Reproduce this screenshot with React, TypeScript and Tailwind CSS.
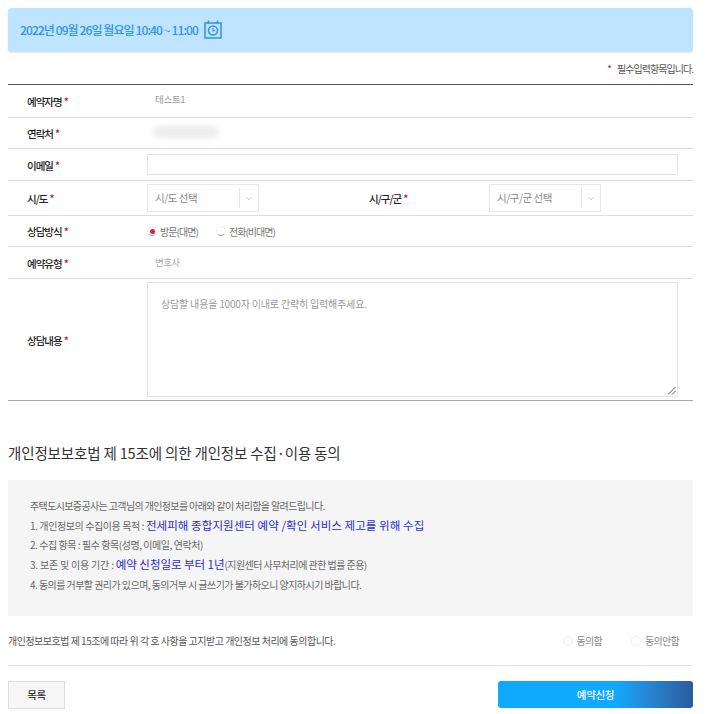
import React from 'react';

const Star = () => <span className="text-[#c8102e] ml-[2px]">*</span>;

const Row = ({ label, h, last, children }: { label: string; h: string; last?: boolean; children: React.ReactNode }) => (
  <div className={`flex items-center ${h} border-b ${last ? 'border-[#aaaaaa]' : 'border-[#dddddd]'}`}>
    <div className="w-[139px] shrink-0 pl-[19px] pt-[2px] text-[10.5px] font-medium text-[#222222] tracking-[-1px]">
      {label}
      <Star />
    </div>
    <div className="flex-1 flex items-center min-w-0">{children}</div>
  </div>
);

const SelectBox = ({ text }: { text: string }) => (
  <div className="flex items-center w-[112px] h-[28px] border border-[#e8e8e8] bg-white">
    <span className="flex-1 pl-[7px] text-[10.5px] text-[#888888] tracking-[-0.5px]">{text}</span>
    <span className="flex items-center justify-center w-[19px] h-[20px] border-l border-[#e3e3e3]">
      <svg width="8" height="5" viewBox="0 0 8 5" fill="none" stroke="#d0d0d0" strokeWidth="1">
        <path d="M1 1l3 3 3-3" />
      </svg>
    </span>
  </div>
);

const Radio = ({ checked, faint, label }: { checked?: boolean; faint?: boolean; label: string }) => (
  <span className={`flex items-center ${faint ? 'gap-[4px]' : 'gap-[3px]'}`}>
    <span
      className={`flex items-center justify-center w-[10px] h-[10px] rounded-full border ${
        faint ? 'border-[#eeeeee]' : 'border-[#eeeeee] border-b-[#999999]'
      }`}
    >
      {checked && <span className="w-[5px] h-[5px] rounded-full bg-[#c8283c]" />}
    </span>
    <span>{label}</span>
  </span>
);

export default function App() {
  return (
    <div className="w-[709px] h-[714px] overflow-hidden bg-white pt-[8px] pl-[8px] pr-[16px] font-['Noto_Sans_CJK_KR','Noto_Sans',sans-serif]">
      {/* 예약 일시 */}
      <div className="flex items-center gap-[6px] h-[44px] pl-[12px] rounded-[4px] bg-[#bfe4fe] shadow-[0_1px_2px_rgba(0,0,0,0.12)]">
        <span className="text-[12px] font-medium text-[#2f93e6] tracking-[-0.9px]">2022년 09월 26일 월요일 10:40 ~ 11:00</span>
        <svg className="-mt-[1px]" width="18" height="19" viewBox="0 0 18 19" fill="none" stroke="#2f93e6" strokeWidth="1.5">
          <rect x="1" y="3" width="16" height="15" />
          <path d="M4.5 0.5v3M13.5 0.5v3" />
          <circle cx="9" cy="10.5" r="4.5" />
          <path d="M9 8v2.7h2.2" strokeWidth="1.2" />
        </svg>
      </div>

      <div className="flex justify-end items-center h-[32px] text-[10px] text-[#555555] tracking-[-0.95px]">
        <span className="text-[#c8102e] mr-[6px]">*</span>필수입력항목입니다.
      </div>

      {/* 입력 폼 */}
      <div className="border-t border-[#555555]">
        <Row label="예약자명" h="h-[33px]">
          <span className="pl-[8px] text-[9.5px] text-[#999999] tracking-[-0.3px] -mt-[4px]">테스트1</span>
        </Row>
        <Row label="연락처" h="h-[31px]">
          <span className="ml-[6px] w-[66px] h-[12px] rounded-full bg-[#ececec] blur-[3px] -mt-[2px]" />
        </Row>
        <Row label="이메일" h="h-[32px]">
          <div className="w-[531px] h-[21px] border border-[#e3e3e3] bg-white" />
        </Row>
        <Row label="시/도" h="h-[35px]">
          <SelectBox text="시/도 선택" />
          <div className="w-[120px] ml-[110px] pt-[2px] text-[10.5px] font-medium text-[#222222] tracking-[-1px]">
            시/구/군
            <Star />
          </div>
          <SelectBox text="시/구/군 선택" />
        </Row>
        <Row label="상담방식" h="h-[31px]">
          <div className="flex gap-[18px] text-[10px] text-[#777777] tracking-[-0.95px]">
            <Radio checked label="방문(대면)" />
            <Radio label="전화(비대면)" />
          </div>
        </Row>
        <Row label="예약유형" h="h-[32px]">
          <span className="pl-[8px] text-[9.5px] text-[#aaaaaa] tracking-[-0.6px]">변호사</span>
        </Row>
        <Row label="상담내용" h="h-[122px]" last>
          <div className="relative w-[531px] h-[115px] border border-[#e3e3e3] bg-white pl-[13px] pt-[13px] text-[10px] text-[#999999] tracking-[-0.18px]">
            상담할 내용을 1000자 이내로 간략히 입력해주세요.
            <svg className="absolute right-[1px] bottom-[1px]" width="9" height="9" viewBox="0 0 9 9" stroke="#555555" strokeWidth="1">
              <path d="M1 8.5L8.5 1M5 8.5L8.5 5" />
            </svg>
          </div>
        </Row>
      </div>

      {/* 개인정보 동의 */}
      <h2 className="mt-[40px] h-[24px] text-[14.5px] leading-[24px] font-normal text-[#333333] tracking-[-0.15px]">
        개인정보보호법 제 15조에 의한 개인정보 수집·이용 동의
      </h2>
      <div className="mt-[15px] h-[136px] bg-[#f5f5f5] pl-[22px] pt-[16px] text-[10px] leading-[19.7px] text-[#666666]">
        <p className="tracking-[-0.63px]">주택도시보증공사는 고객님의 개인정보를 아래와 같이 처리함을 알려드립니다.</p>
        <p className="tracking-[-0.4px]">
          1. 개인정보의 수집이용 목적 : <span className="text-[11.5px] text-[#2a2ad0] tracking-[0.06px]">전세피해 종합지원센터 예약 /확인 서비스 제고를 위해 수집</span>
        </p>
        <p className="tracking-[-0.45px]">2. 수집 항목 : 필수 항목(성명, 이메일, 연락처)</p>
        <p className="tracking-[-0.2px]">
          3. 보존 및 이용 기간 : <span className="text-[11.5px] text-[#2a2ad0] tracking-[-0.05px]">예약 신청일로 부터 1년</span>
          <span className="tracking-[-0.55px]">(지원센터 사무처리에 관한 법률 준용)</span>
        </p>
        <p className="tracking-[-0.55px]">4. 동의를 거부할 권리가 있으며, 동의거부 시 글쓰기가 불가하오니 양지하시기 바랍니다.</p>
      </div>

      <div className="flex items-center justify-between h-[50px] border-b border-[#e5e5e5] text-[10px] text-[#555555] tracking-[-0.5px]">
        <span>개인정보보호법 제 15조에 따라 위 각 호 사항을 고지받고 개인정보 처리에 동의합니다.</span>
        <div className="flex gap-[29px] pr-[14px] text-[#888888] tracking-[-0.7px]">
          <Radio faint label="동의함" />
          <Radio faint label="동의안함" />
        </div>
      </div>

      <div className="flex justify-between mt-[15px]">
        <button className="w-[57px] h-[28px] border border-[#dddddd] bg-[#f7f7f7] text-[10.5px] font-medium text-[#333333] tracking-[-0.5px]">목록</button>
        <button className="w-[195px] h-[27px] rounded-[3px] bg-gradient-to-r from-[#0fa9ff] from-60% to-[#2b5b9e] text-[10.5px] font-medium text-white tracking-[-0.3px]">예약신청</button>
      </div>
    </div>
  );
}
